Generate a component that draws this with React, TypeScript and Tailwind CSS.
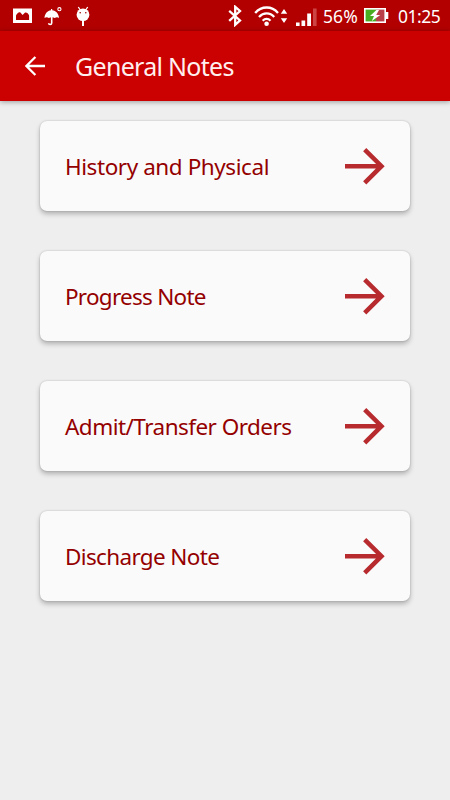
import type { ReactNode } from "react";

const notes = [
  { title: "History and Physical", spacing: "tracking-[-0.43px]" },
  { title: "Progress Note", spacing: "tracking-[-0.74px]" },
  { title: "Admit/Transfer Orders", spacing: "tracking-[-0.53px]" },
  { title: "Discharge Note", spacing: "tracking-[-0.65px]" },
];

function PictureIcon() {
  return (
    <svg className="w-5 h-4" viewBox="0 0 20 16">
      <path d="M0 .5h19v14.5H0z" fill="#fff" />
      <path d="M3 12V7.5C4 5 6 3.6 7.4 4.4L9.6 7l2.2-2.2c1.6-.8 3.4.6 4.3 2.7V12z" fill="#b20000" />
    </svg>
  );
}

function UmbrellaIcon() {
  return (
    <svg className="w-5 h-5 ml-[11px]" viewBox="0 0 20 20" fill="none">
      <path d="M.5 12C.8 7.5 3.5 4.7 7 4.3V3h1.2v1.3c3.7.4 6.5 3.2 6.8 7.7-1.2-1-3-1-4.2 0-1.7-1-4.2-1-6 0-1.2-1-3-1-4.3 0z" fill="#fff" />
      <path d="M7.7 11v6c0 2-3 2-3 .2" stroke="#fff" strokeWidth="1.6" />
      <circle cx="15.4" cy="3.2" r="1.6" stroke="#fff" strokeWidth="1.1" />
    </svg>
  );
}

function DroidIcon() {
  return (
    <svg className="w-[14px] h-5 ml-[12px]" viewBox="0 0 14 20" fill="none">
      <path d="M2.3 1l2 3M11.7 1l-2 3" stroke="#fff" strokeWidth="1.3" />
      <ellipse cx="7" cy="8.8" rx="6.4" ry="6.3" fill="#fff" />
      <path d="M7 14v6" stroke="#fff" strokeWidth="2" />
      <circle cx="4.2" cy="6.8" r=".8" fill="#9b0000" />
      <circle cx="9.8" cy="6.8" r=".8" fill="#9b0000" />
    </svg>
  );
}

function BluetoothIcon() {
  return (
    <svg className="w-4 h-[22px]" viewBox="0 0 16 22" fill="none">
      <path d="M1.2 5.8l10.8 9.6-4.8 4.4V1.8L12 6 1.2 15.8" stroke="#fff" strokeWidth="2.3" />
    </svg>
  );
}

function WifiIcon() {
  return (
    <svg className="w-[34px] h-[22px] ml-[10px]" viewBox="0 0 34 22" fill="none">
      <path d="M1.2 8C7.5.7 17.8.7 24 8M5 12c4.3-4.8 11-4.8 15.2 0M8.7 15.7c2.3-2.4 5.5-2.4 7.8 0" stroke="#fff" strokeWidth="2.3" />
      <circle cx="12.6" cy="18.7" r="2.3" fill="#fff" />
      <path d="M26.8 8.8L30 4l3.2 4.8zM26.8 13.2L30 18l3.2-4.8z" fill="#fff" />
    </svg>
  );
}

function SignalIcon() {
  return (
    <svg className="w-[21px] h-[22px] ml-[8px]" viewBox="0 0 21 22">
      <path d="M0 17.5h3.6V21H0zM5.5 15.5h3.7V21H5.5zM11.2 8.5H15V21h-3.8z" fill="#fff" />
      <path d="M17 3.5h3.6V21H17z" fill="#cc4444" />
    </svg>
  );
}

function BatteryIcon() {
  return (
    <svg className="w-[25px] h-[18px]" viewBox="0 0 25 18">
      <path d="M0 1h22v4h2.3v7H22v4H0z" fill="#fff" />
      <path d="M1.6 2.6H12v11.8H1.6z" fill="#48ad20" />
      <path d="M12 2.6h8.4v11.8H12z" fill="#b94048" />
      <path d="M12.4 3L6 9.1h4l-2.2 5L16.3 8h-4.1L15 3z" fill="#fff" />
    </svg>
  );
}

function StatusText({ children }: { children: ReactNode }) {
  return <span className="text-[17.5px] leading-[32px] text-white whitespace-nowrap">{children}</span>;
}

function StatusBar() {
  return (
    <div className="flex items-center h-[31px] bg-[#b20000]">
      <div className="flex items-center pl-[13px]">
        <PictureIcon />
        <UmbrellaIcon />
        <DroidIcon />
      </div>
      <div className="flex items-center ml-auto">
        <BluetoothIcon />
        <WifiIcon />
        <SignalIcon />
        <div className="w-[47px] pl-[6px] tracking-[0.1px]">
          <StatusText>56%</StatusText>
        </div>
        <BatteryIcon />
        <div className="w-[61px] pl-[9px] tracking-[-0.5px]">
          <StatusText>01:25</StatusText>
        </div>
      </div>
    </div>
  );
}

function NoteCard({ title, spacing }: { title: string; spacing: string }) {
  return (
    <button className="flex items-center justify-between h-[90px] pl-[25px] pr-[25px] rounded-[7px] bg-[#fafafa] shadow-[0_3px_5px_rgba(0,0,0,0.25),0_0_2px_rgba(0,0,0,0.2)]">
      <span className={`pt-0.5 text-[22.5px] leading-[32px] text-[#940000] whitespace-nowrap ${spacing}`}>{title}</span>
      <svg className="w-10 h-10" viewBox="0 0 40 40" fill="none">
        <path d="M0 20.2h37M19.7 3.6L36.5 20.2 19.7 36.8" stroke="#b72b2e" strokeWidth="4.5" />
      </svg>
    </button>
  );
}

export default function App() {
  return (
    <div className="flex flex-col h-[800px] w-[450px] bg-[#eeeeee] font-['Noto_Sans',sans-serif] overflow-hidden">
      <StatusBar />
      <header className="flex items-center h-[70px] pl-[25px] bg-[#cb0000] shadow-[0_1px_5px_rgba(0,0,0,0.35)]">
        <svg className="w-5 h-5" viewBox="0 0 20 20" fill="none">
          <path d="M20 10H2M10.4 1L1.4 10l9 9" stroke="#fff" strokeWidth="2.3" />
        </svg>
        <h1 className="ml-[30px] text-[25px] leading-[34px] text-[#fff0ef] whitespace-nowrap tracking-[-0.7px]">General Notes</h1>
      </header>
      <main className="flex flex-col gap-10 px-10 pt-5">
        {notes.map((note) => (
          <NoteCard key={note.title} title={note.title} spacing={note.spacing} />
        ))}
      </main>
    </div>
  );
}
